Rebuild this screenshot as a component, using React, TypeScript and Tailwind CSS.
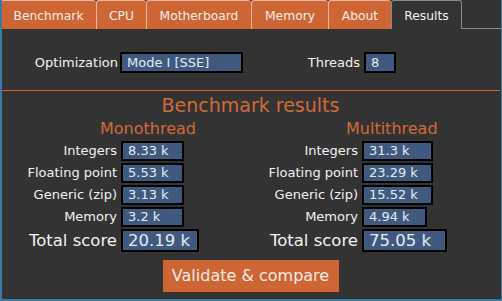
import React from "react";

const tabs = [
  { name: "Benchmark", w: 96 },
  { name: "CPU", w: 50 },
  { name: "Motherboard", w: 105 },
  { name: "Memory", w: 77 },
  { name: "About", w: 63 },
];

type Row = { label: string; value: string; w: number };

const mono: Row[] = [
  { label: "Integers", value: "8.33 k", w: 63 },
  { label: "Floating point", value: "5.53 k", w: 63 },
  { label: "Generic (zip)", value: "3.13 k", w: 63 },
  { label: "Memory", value: "3.2 k", w: 63 },
];
const multi: Row[] = [
  { label: "Integers", value: "31.3 k", w: 71 },
  { label: "Floating point", value: "23.29 k", w: 71 },
  { label: "Generic (zip)", value: "15.52 k", w: 71 },
  { label: "Memory", value: "4.94 k", w: 65 },
];

function Column({
  title,
  titlePad,
  rows,
  total,
  totalW,
}: {
  title: string;
  titlePad: number;
  rows: Row[];
  total: string;
  totalW: number;
}) {
  return (
    <div className="flex flex-col w-[241px] shrink-0">
      <div
        className="text-[16px] leading-[20px] text-[#d2693a] h-[20px] shrink-0"
        style={{ paddingLeft: titlePad }}
      >
        {title}
      </div>
      <div className="flex flex-col gap-[2px] mt-[2px] shrink-0">
        {rows.map((r) => (
          <div key={r.label} className="flex items-center h-[20px] shrink-0">
            <div className="w-[117px] text-right text-[13px] text-[#f2f2f2] leading-[20px]">
              {r.label}
            </div>
            <div
              className="ml-[4px] h-[20px] border-2 border-black bg-[#3f5a7e] text-[#e6ebf2] text-[13px] leading-[16px] pl-[5px]"
              style={{ width: r.w }}
            >
              {r.value}
            </div>
          </div>
        ))}
        <div className="flex items-center h-[23px] shrink-0">
          <div className="w-[117px] text-right text-[16.5px] text-[#f2f2f2] leading-[23px] whitespace-nowrap">
            Total score
          </div>
          <div
            className="ml-[4px] h-[23px] border-2 border-black bg-[#3f5a7e] text-[#e6ebf2] text-[16.5px] leading-[19px] pl-[5px]"
            style={{ width: totalW }}
          >
            {total}
          </div>
        </div>
      </div>
    </div>
  );
}

export default function App() {
  return (
    <div
      className="w-[502px] h-[301px] bg-[#333333] flex flex-col overflow-hidden border-l-2 border-b-2 border-r border-[#3c7aa2]"
      style={{ fontFamily: '"DejaVu Sans", Verdana, sans-serif' }}
    >
      {/* Tabs */}
      <div className="flex h-[29px] -ml-[2px] shrink-0">
        {tabs.map((t) => (
          <div
            key={t.name}
            className="h-[29px] bg-[#cd6535] border-t border-l border-[#f0b49a] rounded-t-[3px] flex items-center justify-center text-[12.3px] text-[#f7ece6] pt-[2px] shrink-0"
            style={{ width: t.w }}
          >
            {t.name}
          </div>
        ))}
        <div className="w-[71px] h-[29px] bg-[#333333] border-t border-l border-r border-[#8a8a8a] rounded-t-[3px] flex items-center justify-center text-[12.3px] text-[#f2f2f2] pt-[2px] shrink-0">
          Results
        </div>
        <div className="flex-1 h-[29px] border-b border-[#8a8a8a]" />
      </div>

      {/* Options row */}
      <div className="flex items-center h-[21px] mt-[23px] shrink-0">
        <div className="w-[116px] text-right text-[13px] text-[#f2f2f2]">Optimization</div>
        <div className="ml-[2px] w-[123px] h-[21px] border-2 border-black bg-[#3f5a7e] text-[#e6ebf2] text-[13px] leading-[17px] pl-[5px]">
          Mode I [SSE]
        </div>
        <div className="w-[117px] text-right text-[13px] text-[#f2f2f2]">Threads</div>
        <div className="ml-[4px] w-[32px] h-[21px] border-2 border-black bg-[#3f5a7e] text-[#e6ebf2] text-[13px] leading-[17px] pl-[5px]">
          8
        </div>
      </div>

      {/* Separator */}
      <div className="h-[1px] bg-[#d2622d] mt-[17px] mr-[1px] shrink-0" />

      {/* Heading */}
      <div className="text-center text-[19px] leading-[22px] text-[#d2693a] mt-[3px] -ml-[2px] shrink-0">
        Benchmark results
      </div>

      <div className="flex -ml-[2px] mt-[3px] shrink-0">
        <Column title="Monothread" titlePad={100} rows={mono} total="20.19 k" totalW={78} />
        <Column title="Multithread" titlePad={105} rows={multi} total="75.05 k" totalW={85} />
      </div>

      <div className="flex justify-center mt-[8px] -ml-[2px] shrink-0">
        <div className="w-[176px] h-[32px] bg-[#cd6535] text-[#f5ece6] text-[16px] flex items-center justify-center">
          Validate &amp; compare
        </div>
      </div>
    </div>
  );
}
